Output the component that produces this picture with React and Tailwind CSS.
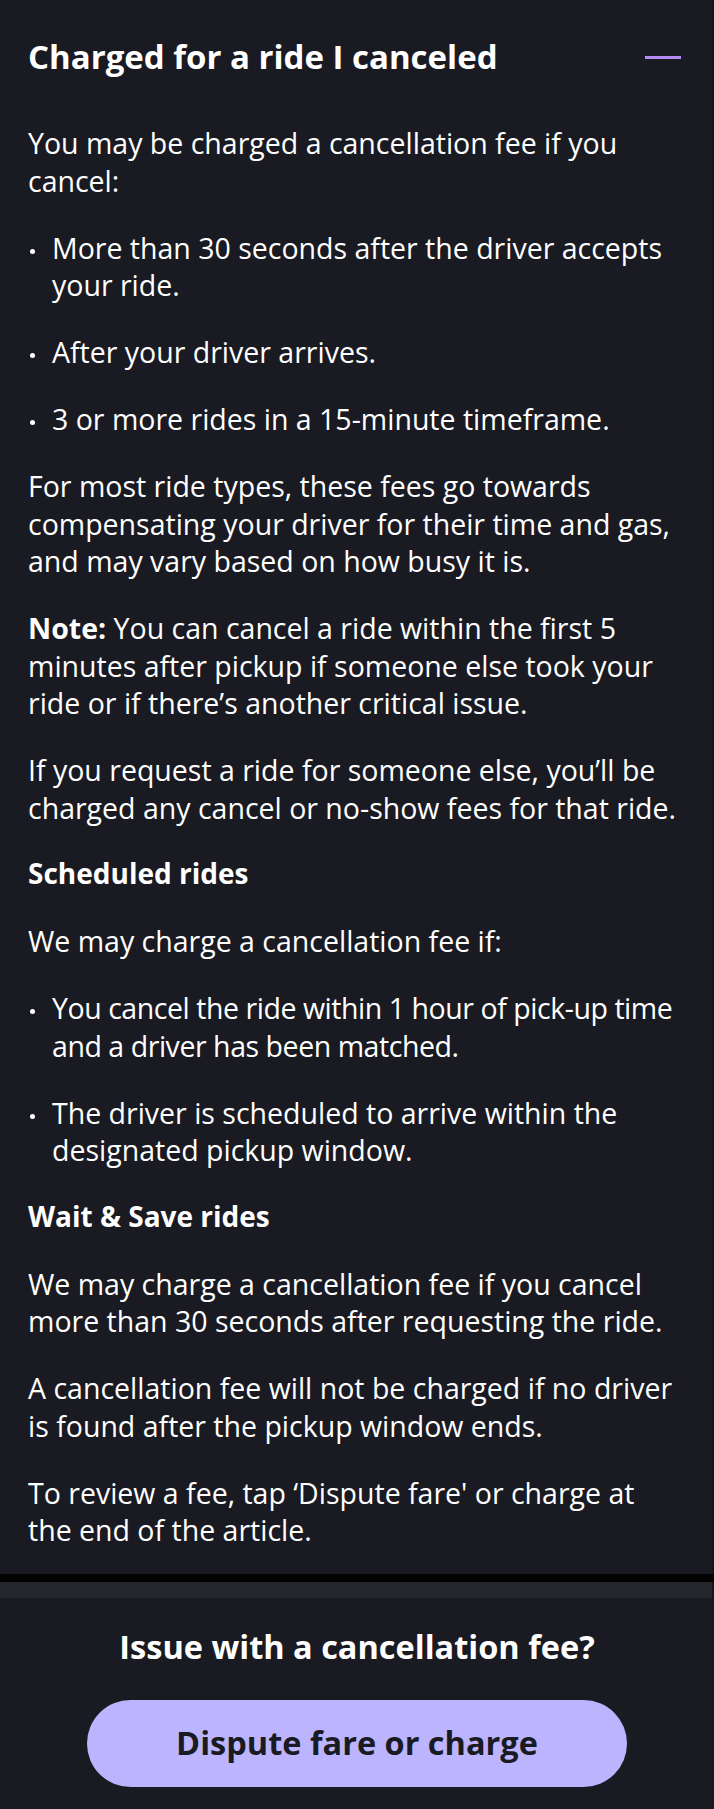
import React from "react";

const F = { fontFamily: "'Open Sans', 'Noto Sans', sans-serif" };

function Bullet({ children, className = "" }) {
  return (
    <li className={"flex items-start " + className}>
      <span className="w-[24px] shrink-0">
        <span className="mt-[19px] ml-[2px] block h-[5px] w-[5px] rounded-full bg-white"></span>
      </span>
      <span>{children}</span>
    </li>
  );
}

export default function App() {
  return (
    <div className="w-[714px] bg-[#1a1b22] text-white" style={F}>
      <section className="border-r-2 border-[#14151a] px-[28px] pt-[37px] pb-[24px]">
        <div className="flex items-center justify-between">
          <h1 className="text-[33px] font-bold leading-[40px]">Charged for a ride I canceled</h1>
          <span className="mr-[3px] block h-[3px] w-[36px] bg-[#b48cf2]"></span>
        </div>
        <div className="mt-[48px] text-[28.5px] leading-[37.5px]">
          <p className="mb-[29.5px]">You may be charged a cancellation fee if you cancel:</p>
          <ul className="mb-[29.5px] flex flex-col gap-[29.5px]">
            <Bullet>More than 30 seconds after the driver accepts your ride.</Bullet>
            <Bullet>After your driver arrives.</Bullet>
            <Bullet>3 or more rides in a 15-minute timeframe.</Bullet>
          </ul>
          <p className="mb-[29.5px]">
            For most ride types, these fees go towards compensating your driver for their time and gas, and may vary based on how busy it is.
          </p>
          <p className="mb-[29.5px]">
            <strong className="font-bold">Note:</strong> You can cancel a ride within the first 5 minutes after pickup if someone else took your ride or if there’s another critical issue.
          </p>
          <p className="mb-[30px]">
            If you request a ride for someone else, you’ll be charged any cancel or no-show fees for that ride.
          </p>
          <h2 className="mb-[34px] text-[28px] font-bold leading-[32px]">Scheduled rides</h2>
          <p className="mb-[29.5px]">We may charge a cancellation fee if:</p>
          <ul className="mb-[30px] flex flex-col gap-[29.5px]">
            <Bullet className="tracking-[-0.45px]">You cancel the ride within 1 hour of pick-up time and a driver has been matched.</Bullet>
            <Bullet>The driver is scheduled to arrive within the designated pickup window.</Bullet>
          </ul>
          <h2 className="mb-[34px] text-[28px] font-bold leading-[32px]">Wait &amp; Save rides</h2>
          <p className="mb-[29.5px]">
            We may charge a cancellation fee if you cancel more than 30 seconds after requesting the ride.
          </p>
          <p className="mb-[29.5px]">
            A cancellation fee will not be charged if no driver is found after the pickup window ends.
          </p>
          <p>To review a fee, tap ‘Dispute fare' or charge at the end of the article.</p>
        </div>
      </section>
      <div className="h-[8px] bg-[#030303]"></div>
      <div className="h-[16px] border-r-2 border-[#14151a] bg-[#25262b]"></div>
      <section className="flex flex-col items-center pt-[29px] pb-[24px]">
        <h3 className="text-[32.5px] font-bold leading-[40px]">Issue with a cancellation fee?</h3>
        <button className="mt-[33px] flex h-[87px] w-[540px] items-center justify-center rounded-full bg-[#bcb4ff] text-[32.5px] font-bold text-[#1a1b22]">
          Dispute fare or charge
        </button>
      </section>
    </div>
  );
}
